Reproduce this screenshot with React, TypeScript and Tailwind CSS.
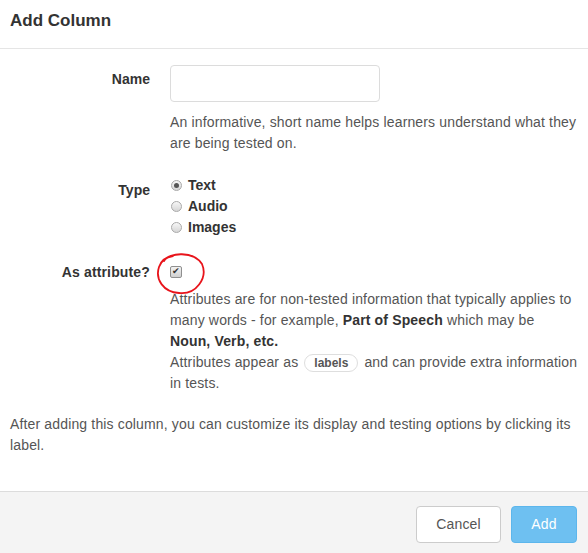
function Radio({ checked }: { checked?: boolean }) {
  return (
    <span className="ml-[1px] inline-flex h-[11px] w-[11px] items-center justify-center rounded-full border border-[#a9a9a9] bg-gradient-to-b from-[#f7f7f7] to-[#d6d6d6]">
      {checked && <span className="h-[5px] w-[5px] rounded-full bg-[#555]" />}
    </span>
  )
}

export default function App() {
  return (
    <div
      className="relative h-[553px] w-full overflow-hidden bg-white text-[14px] tracking-[0.15px] text-[#555]"
      style={{ fontFamily: '"Liberation Sans", Arial, sans-serif' }}
    >
      {/* header */}
      <div className="h-[49px] border-b border-[#e5e5e5] px-[10px] pt-[10px]">
        <h4 className="text-[17px] font-bold leading-[22px] tracking-normal text-[#333]">Add Column</h4>
      </div>

      {/* body */}
      <div className="h-[442px] px-[10px] pt-[16px]">
        <div className="grid grid-cols-[140px_1fr] gap-x-[20px]">
          {/* Name */}
          <label className="pt-[4px] text-right font-bold leading-[21px] tracking-normal text-[#333]">Name</label>
          <div>
            <input className="block h-[37px] w-[210px] rounded-[4px] border border-[#dcdcdc] px-[10px] outline-none" />
            <p className="mt-[10px] leading-[21px]">
              An informative, short name helps learners understand what they are being tested on.
            </p>
          </div>

          {/* Type */}
          <label className="mt-[21px] pt-[5px] text-right font-bold leading-[21px] tracking-normal text-[#333]">Type</label>
          <div className="mt-[21px] flex flex-col font-bold leading-[21px] tracking-normal text-[#333]">
            <div className="flex items-center gap-[6px]">
              <Radio checked />
              <span>Text</span>
            </div>
            <div className="flex items-center gap-[6px]">
              <Radio />
              <span>Audio</span>
            </div>
            <div className="flex items-center gap-[6px]">
              <Radio />
              <span>Images</span>
            </div>
          </div>

          {/* As attribute */}
          <label className="mt-[23px] pt-[1px] text-right font-bold leading-[21px] text-[#333]">As attribute?</label>
          <div className="mt-[23px]">
            <div className="flex h-[21px] items-center">
              <span className="flex h-[12px] w-[12px] items-center justify-center rounded-[2px] border border-[#8f8f8f] bg-gradient-to-b from-[#f2f2f2] to-[#d0d0d0] text-[9px] leading-none text-[#333]">
                ✔
              </span>
            </div>
            <p className="mt-[7px] leading-[21px]">
              Attributes are for non-tested information that typically applies to many words - for example,{' '}
              <strong className="text-[#333]">Part of Speech</strong> which may be{' '}
              <strong className="text-[#333]">Noun, Verb, etc.</strong>
              <br />
              Attributes appear as{' '}
              <span className="mx-[2px] inline-block rounded-full border border-[#dedede] px-[9px] text-[12px] font-bold leading-[16px] tracking-normal text-[#555]">
                labels
              </span>{' '}
              and can provide extra information in tests.
            </p>
          </div>
        </div>

        <p className="mt-[20px] leading-[21px]">
          After adding this column, you can customize its display and testing options by clicking its label.
        </p>
      </div>

      {/* footer */}
      <div className="flex h-[62px] justify-end gap-[10px] border-t border-[#dcdcdc] bg-[#f4f4f4] pr-[11px] pt-[14px]">
        <button className="h-[37px] w-[85px] rounded-[4px] border border-[#cccccc] bg-white text-[#555]">Cancel</button>
        <button className="h-[37px] w-[66px] rounded-[4px] border border-[#5cb6ec] bg-[#6ec0f1] text-white">Add</button>
      </div>

      {/* hand-drawn red circle around the checkbox */}
      <svg className="absolute left-[150px] top-[248px]" width="62" height="52" viewBox="0 0 62 52" fill="none">
        <path
          d="M14 13 C19 4, 44 3, 52 16 C58 30, 46 47, 29 45 C13 44, 5 31, 9 19 C11 13, 16 9, 23 8"
          stroke="#e8141b"
          strokeWidth="1.8"
          strokeLinecap="round"
        />
      </svg>
    </div>
  )
}
